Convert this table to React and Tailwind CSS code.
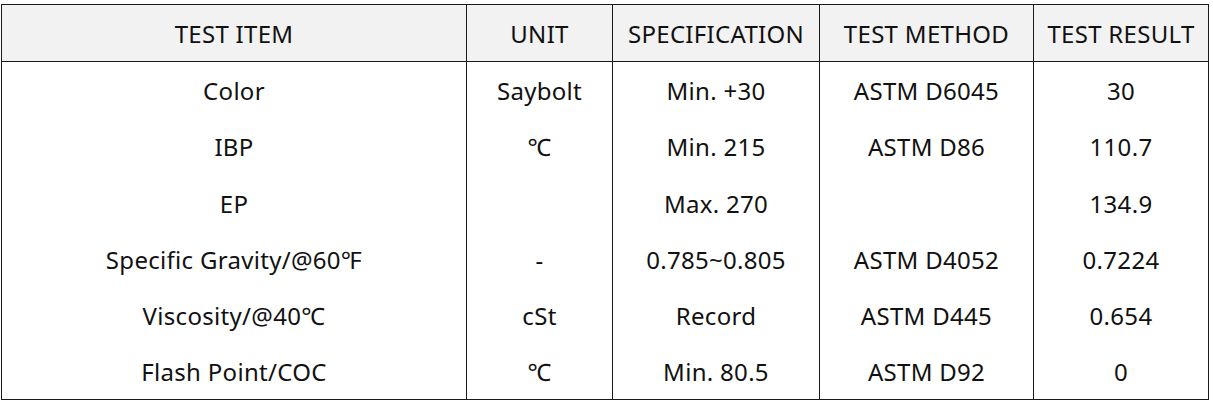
import React from 'react';

const rows = [
  ['Color', 'Saybolt', 'Min. +30', 'ASTM D6045', '30'],
  ['IBP', '℃', 'Min. 215', 'ASTM D86', '110.7'],
  ['EP', '', 'Max. 270', '', '134.9'],
  ['Specific Gravity/@60℉', '-', '0.785~0.805', 'ASTM D4052', '0.7224'],
  ['Viscosity/@40℃', 'cSt', 'Record', 'ASTM D445', '0.654'],
  ['Flash Point/COC', '℃', 'Min. 80.5', 'ASTM D92', '0'],
];

const headers = ['TEST ITEM', 'UNIT', 'SPECIFICATION', 'TEST METHOD', 'TEST RESULT'];
const widths = ['w-[465px]', 'w-[146px]', 'w-[207px]', 'w-[214px]', 'w-[175px]'];
const heights = ['h-[56px]', 'h-[56px]', 'h-[57px]', 'h-[56px]', 'h-[56px]', 'h-[57px]'];

export default function App() {
  return (
    <div className="min-h-screen bg-white pt-[4px] pl-[1px] font-['Noto_Sans','Noto_Sans_CJK_KR',sans-serif] text-[24px] tracking-[0.3px] text-[#111]">
      <table className="border-collapse table-fixed w-[1207px] border border-[#1a1a1a]">
        <thead>
          <tr className="h-[57px] bg-[#f2f2f2]">
            {headers.map((h, i) => (
              <th key={h} className={`${widths[i]} border border-[#1a1a1a] font-normal text-center p-0 pt-[1px]`}>
                {h}
              </th>
            ))}
          </tr>
        </thead>
        <tbody>
          {rows.map((r, ri) => (
            <tr key={ri} className={heights[ri]}>
              {r.map((c, ci) => (
                <td key={ci} className="border-x border-[#1a1a1a] text-center p-0 pt-[3px]">
                  {c}
                </td>
              ))}
            </tr>
          ))}
        </tbody>
      </table>
    </div>
  );
}
